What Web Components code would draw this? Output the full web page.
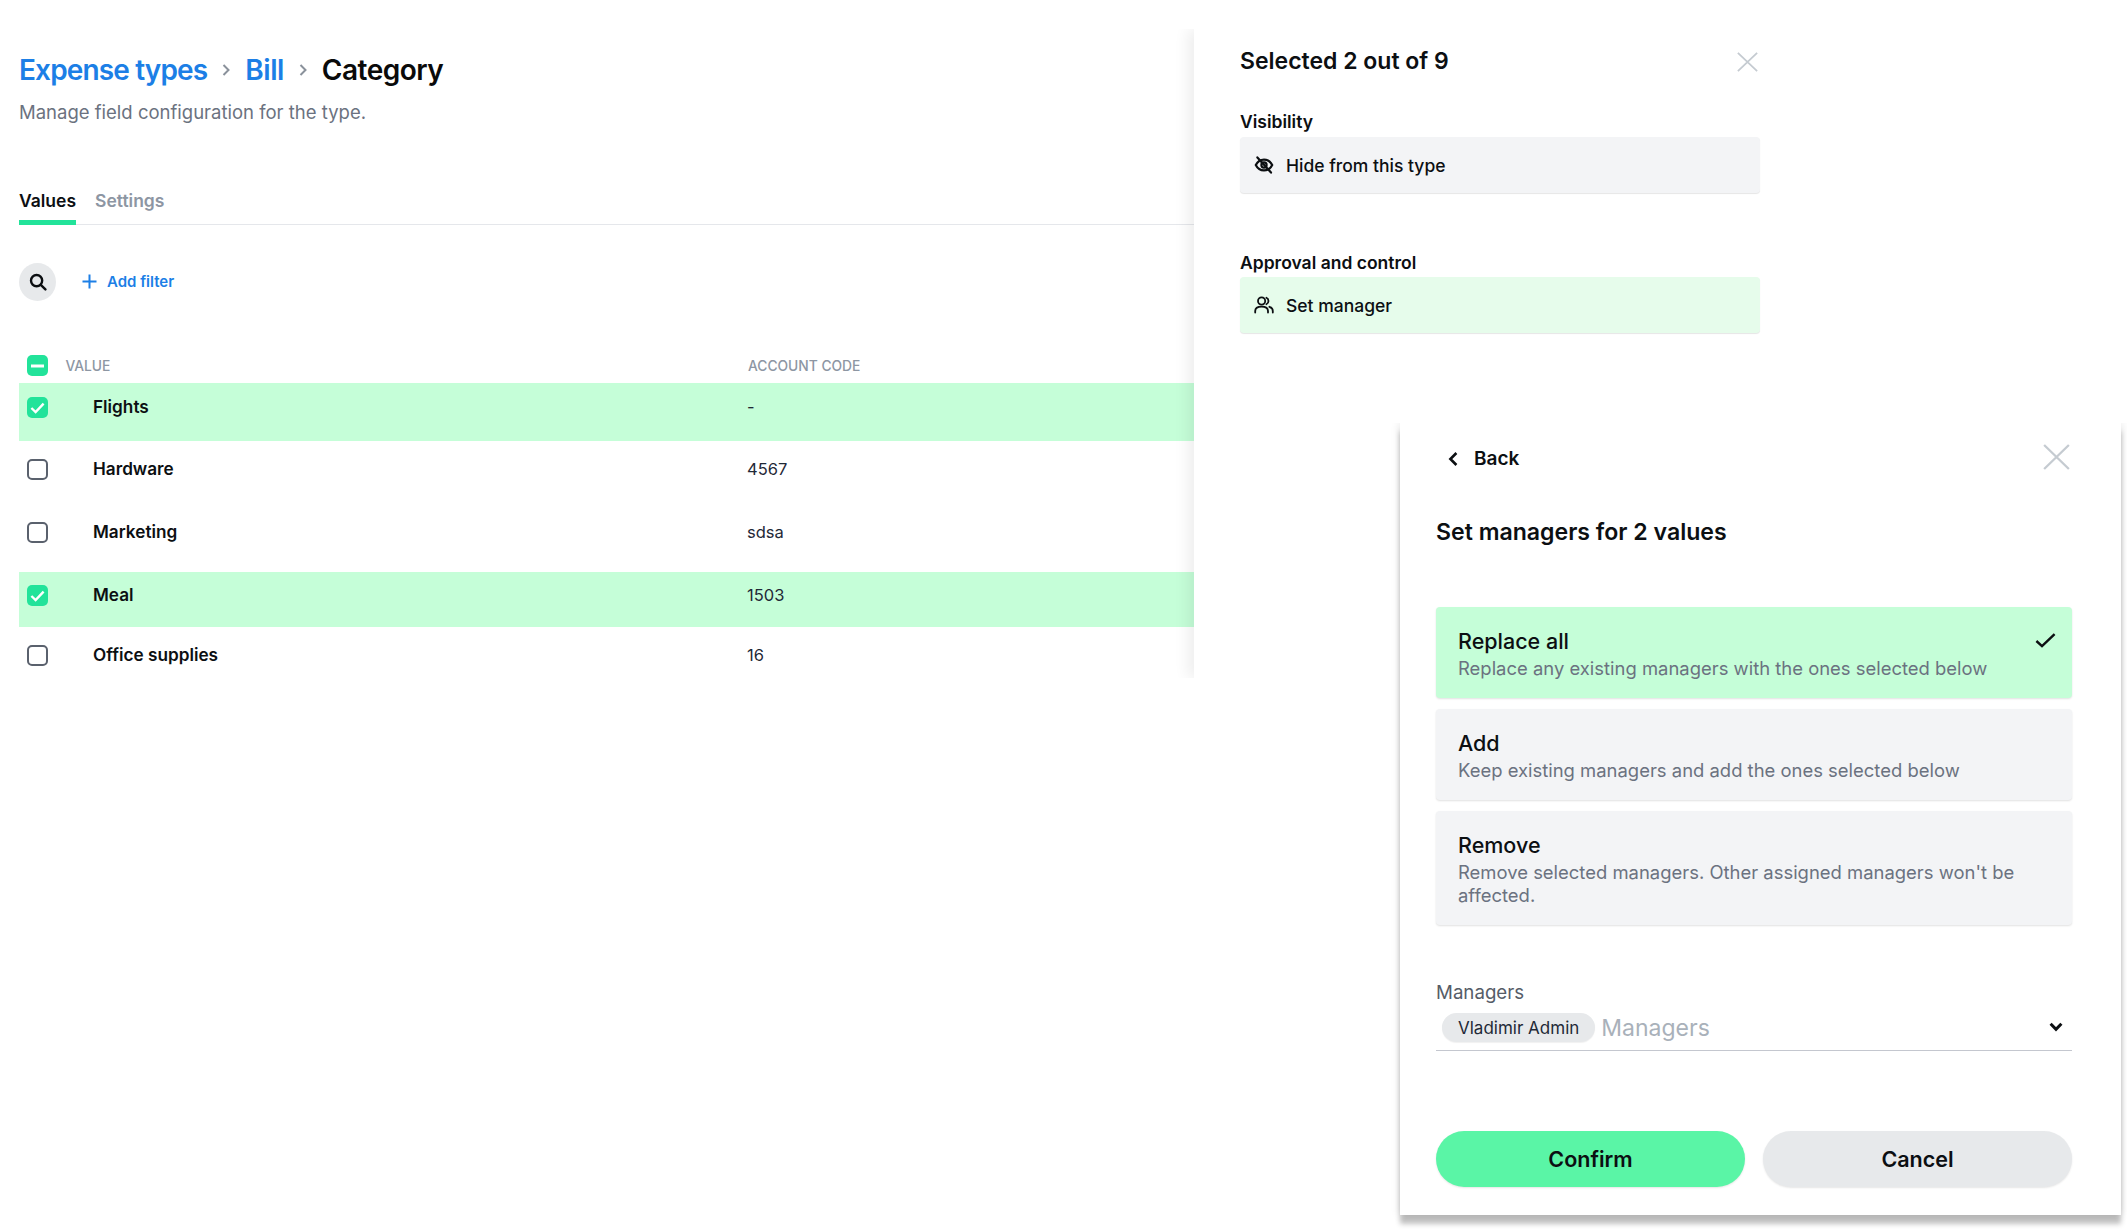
<!DOCTYPE html>
<html>
<head>
<meta charset="utf-8">
<title>Expense types</title>
<style>
  html, body { margin: 0; padding: 0; background: #fff; }
  body { font-family: Inter, "Liberation Sans", sans-serif; width: 2127px; height: 1230px; overflow: hidden; color: #0c0f12; }
</style>
</head>
<body>
<app-page>
  <type-view slot="main"></type-view>
  <bulk-panel slot="side"></bulk-panel>
  <manager-panel slot="over"></manager-panel>
</app-page>

<script>
const ICONS = {
  close: `<svg width="100%" height="100%" viewBox="0 0 24 24" fill="none" stroke="#c5cbd1" stroke-width="2" preserveAspectRatio="none"><path d="M1 1 23 23M23 1 1 23"/></svg>`,
  search: `<svg width="18" height="18" viewBox="0 0 18 18" fill="none" stroke="#0c0f12" stroke-width="2.4"><circle cx="7.6" cy="7.6" r="5.6"/><path d="M11.8 11.8 16.4 16.4" stroke-linecap="round"/></svg>`,
  plus: `<svg width="15" height="15" viewBox="0 0 15 15" fill="none" stroke="#1c7fe6" stroke-width="2"><path d="M7.5 0.5v14M0.5 7.5h14"/></svg>`,
  chevron: `<svg width="10" height="14" viewBox="0 0 10 14" fill="none" stroke="#8a919b" stroke-width="2"><path d="M2.5 2 7.5 7 2.5 12"/></svg>`,
  eyeOff: `<svg width="20" height="20" viewBox="0 0 20 20" fill="none" stroke="#0c0f12" stroke-width="2.2" stroke-linecap="round"><path d="M1.8 10C3.6 6.4 6.5 4.6 10 4.6S16.4 6.4 18.2 10C16.4 13.6 13.5 15.4 10 15.4S3.6 13.6 1.8 10Z"/><circle cx="10" cy="10" r="2.6"/><path d="M3.4 2.4 17 17.6"/></svg>`,
  users: `<svg width="20" height="20" viewBox="0 0 20 20" fill="none" stroke="#0c0f12" stroke-width="1.8" stroke-linecap="round"><circle cx="7.6" cy="6" r="3.6"/><path d="M1.2 17.6V16c0-2.6 2.2-4.4 6.4-4.4s6.4 1.8 6.4 4.4v1.6"/><path d="M12.4 2.8a3.5 3.5 0 0 1 0 6.4M15.4 11.8c2 .7 3.4 2.2 3.4 4.2v1.6"/></svg>`,
  back: `<svg width="10" height="16" viewBox="0 0 10 16" fill="none" stroke="#0c0f12" stroke-width="2.6"><path d="M8.4 2 2.4 8l6 6"/></svg>`,
  check: `<svg width="21" height="15" viewBox="0 0 21 15" fill="none" stroke="#0c0f12" stroke-width="2.4"><path d="M1.4 8 7 13.2 19.6 1.2"/></svg>`,
  down: `<svg width="14" height="10" viewBox="0 0 14 10" fill="none" stroke="#0c0f12" stroke-width="3"><path d="M1.6 1.8 7 7.4l5.4-5.6"/></svg>`
};

class AppPage extends HTMLElement {
  constructor() {
    super();
    this.attachShadow({ mode: "open" }).innerHTML = `
      <style>
        :host { display: flex; position: relative; width: 2127px; height: 1230px; align-items: flex-start; }
        .main { width: 1194px; flex: none; }
        .over { position: absolute; left: 1400px; top: 423px; z-index: 2; }
      </style>
      <div class="main"><slot name="main"></slot></div>
      <slot name="side"></slot>
      <div class="over"><slot name="over"></slot></div>`;
  }
}

class TypeView extends HTMLElement {
  constructor() {
    super();
    this.attachShadow({ mode: "open" }).innerHTML = `
      <style>
        :host { display: block; height: 678px; padding: 50px 0 0 19px; box-sizing: border-box; overflow: hidden; }
        .crumbs { display: flex; align-items: center; height: 40px; font-size: 28px; font-weight: 600; letter-spacing: -0.5px; }
        .crumbs a { color: #1c7fe6; }
        .crumbs a.long { letter-spacing: -0.85px; }
        .crumbs span { display: flex; width: 38px; justify-content: center; }
        .sub { margin: 11px 0 0; font-size: 18.5px; line-height: 23px; color: #6b7280; }
        .tabs { display: flex; gap: 19px; margin-top: 65px; border-bottom: 1px solid #e5e7eb; font-size: 17.5px; font-weight: 600; height: 35px; }
        .tab { color: #8d96a3; line-height: 24px; box-sizing: border-box; height: 36px; }
        .tab.on { color: #0c0f12; border-bottom: 5px solid #22e39a; border-radius: 3px 3px 0 0; }
        .filters { display: flex; align-items: center; margin-top: 38px; height: 38px; }
        .search { width: 37px; height: 38px; border-radius: 50%; background: #e7e9eb; display: flex; align-items: center; justify-content: center; }
        .add { display: flex; align-items: center; gap: 10px; margin-left: 26px; margin-top: -2px; color: #1c7fe6; font-size: 15px; font-weight: 600; }
        value-table { margin-top: 54px; }
      </style>
      <div class="crumbs">
        <a class="long">Expense types</a><span>${ICONS.chevron}</span><a>Bill</a><span>${ICONS.chevron}</span><b style="font-weight:600;color:#0a0a0a">Category</b>
      </div>
      <p class="sub">Manage field configuration for the type.</p>
      <div class="tabs"><div class="tab on">Values</div><div class="tab">Settings</div></div>
      <div class="filters">
        <div class="search">${ICONS.search}</div>
        <div class="add">${ICONS.plus}<span>Add filter</span></div>
      </div>
      <value-table></value-table>`;
  }
}

class CheckBox extends HTMLElement {
  constructor() {
    super();
    this.attachShadow({ mode: "open" });
  }
  connectedCallback() {
    const state = this.getAttribute("state") || "off";
    let mark = "";
    if (state === "on") mark = `<svg width="15" height="12" viewBox="0 0 15 12" fill="none" stroke="#fff" stroke-width="2.4"><path d="M1.4 6 5.6 10 13.6 1.6"/></svg>`;
    if (state === "some") mark = `<svg width="13" height="4" viewBox="0 0 13 4" fill="none" stroke="#fff" stroke-width="3"><path d="M0 2h13"/></svg>`;
    this.shadowRoot.innerHTML = `
      <style>
        :host { display: block; width: 21px; height: 21px; }
        div { box-sizing: border-box; width: 100%; height: 100%; border-radius: 5px; display: flex; align-items: center; justify-content: center; }
        .off { border: 2px solid #5a616d; background: #fff; }
        .on, .some { background: #22e39a; }
      </style>
      <div class="${state}">${mark}</div>`;
  }
}

class ValueRow extends HTMLElement {
  constructor() {
    super();
    this.attachShadow({ mode: "open" });
  }
  connectedCallback() {
    const on = this.hasAttribute("selected");
    this.shadowRoot.innerHTML = `
      <style>
        :host { display: grid; grid-template-columns: 74px 654px 1fr; box-sizing: border-box; padding-top: ${this.getAttribute("pad") || 14}px; height: ${this.getAttribute("h")}px; background: ${on ? "#c5fed8" : "transparent"}; margin-bottom: ${this.getAttribute("gap") || 0}px; }
        check-box { margin-left: 8px; }
        div { font-size: 17.2px; line-height: 20px; }
        .name { font-weight: 600; color: #0c0f12; }
        .code { color: #1f2937; font-size: 16.5px; }
      </style>
      <check-box state="${on ? "on" : "off"}"></check-box>
      <div class="name">${this.getAttribute("name")}</div>
      <div class="code">${this.getAttribute("code")}</div>`;
  }
}

class ValueTable extends HTMLElement {
  constructor() {
    super();
    this.attachShadow({ mode: "open" }).innerHTML = `
      <style>
        :host { display: block; }
        .head { display: grid; grid-template-columns: 38.5px 682.5px 1fr; height: 28px; padding-left: 8px; font-size: 13.8px; line-height: 22px; font-weight: 500; color: #8d96a3; }
      </style>
      <div class="head"><check-box state="some"></check-box><span>VALUE</span><span>ACCOUNT CODE</span></div>
      <value-row selected name="Flights" code="-" h="58" gap="4"></value-row>
      <value-row name="Hardware" code="4567" h="63"></value-row>
      <value-row name="Marketing" code="sdsa" h="64"></value-row>
      <value-row selected name="Meal" code="1503" h="55" gap="4" pad="13"></value-row>
      <value-row name="Office supplies" code="16" h="47"></value-row>`;
  }
}

class ActionCard extends HTMLElement {
  constructor() {
    super();
    this.attachShadow({ mode: "open" });
  }
  connectedCallback() {
    const green = this.hasAttribute("green");
    this.shadowRoot.innerHTML = `
      <style>
        :host { display: flex; align-items: center; gap: 12px; box-sizing: border-box; height: 56px; padding-left: 14px; border-radius: 4px; font-size: 17.5px; font-weight: 500; color: #0c0f12; background: ${green ? "#e6fceb" : "#f3f4f6"}; box-shadow: 0 1px 1px rgba(0,0,0,.1); }
      </style>
      ${ICONS[this.getAttribute("icon")]}<slot></slot>`;
  }
}

class BulkPanel extends HTMLElement {
  constructor() {
    super();
    this.attachShadow({ mode: "open" }).innerHTML = `
      <style>
        :host { display: block; position: relative; z-index: 1; margin-top: 29px; box-sizing: border-box; width: 600px; height: 649px; padding: 16px 34px 0 46px; background: #fff; box-shadow: -6px 0 14px rgba(0,0,0,.07); clip-path: inset(0 0 0 -30px); }
        .top { display: flex; justify-content: space-between; align-items: center; height: 32px; font-size: 23px; font-weight: 600; }
        .x { width: 21px; height: 20px; margin-right: 2px; margin-top: -2px; }
        .label { font-size: 17.5px; font-weight: 600; line-height: 24px; }
        .a { margin-top: 33px; margin-bottom: 3px; }
        .b { margin-top: 58px; margin-bottom: 2px; }
      </style>
      <div class="top"><span>Selected 2 out of 9</span><div class="x">${ICONS.close}</div></div>
      <div class="label a">Visibility</div>
      <action-card icon="eyeOff">Hide from this type</action-card>
      <div class="label b">Approval and control</div>
      <action-card icon="users" green>Set manager</action-card>`;
  }
}

class OptionCard extends HTMLElement {
  constructor() {
    super();
    this.attachShadow({ mode: "open" });
  }
  connectedCallback() {
    const on = this.hasAttribute("selected");
    this.shadowRoot.innerHTML = `
      <style>
        :host { display: block; position: relative; box-sizing: border-box; padding: 19px 22px 18px 22px; border-radius: 4px; background: ${on ? "#c5fed8" : "#f3f4f6"}; box-shadow: 0 1px 2px rgba(0,0,0,.12); margin-bottom: 11px; }
        .t { font-size: 21.5px; font-weight: 500; line-height: 30px; color: #0c0f12; margin-bottom: 1px; }
        .d { font-size: 18.45px; line-height: 23px; color: #6b7280; }
        .ok { position: absolute; right: 16px; top: 26px; line-height: 0; }
      </style>
      <div class="t">${this.getAttribute("heading")}</div>
      <div class="d"><slot></slot></div>
      ${on ? `<div class="ok">${ICONS.check}</div>` : ""}`;
  }
}

class ManagerSelect extends HTMLElement {
  constructor() {
    super();
    this.attachShadow({ mode: "open" }).innerHTML = `
      <style>
        :host { display: block; }
        .label { font-size: 18.7px; line-height: 24px; color: #565d68; }
        .box { display: flex; align-items: center; margin-top: 8px; padding: 0 9px 8px 6px; box-sizing: border-box; height: 38px; border-bottom: 1px solid #c4c7cf; }
        .chip { display: flex; align-items: center; height: 29px; padding: 0 16px 0 16px; border-radius: 15px; background: #e7e9eb; font-size: 17px; color: #1f2937; box-shadow: 0 1px 1px rgba(0,0,0,.06); }
        .ph { margin-left: 6px; font-size: 23px; color: #a9b1ba; flex: 1; }
        svg { display: block; margin-top: -2px; }
      </style>
      <div class="label">Managers</div>
      <div class="box"><div class="chip">Vladimir Admin</div><div class="ph">Managers</div>${ICONS.down}</div>`;
  }
}

class PillButton extends HTMLElement {
  constructor() {
    super();
    this.attachShadow({ mode: "open" });
  }
  connectedCallback() {
    const main = this.hasAttribute("primary");
    this.shadowRoot.innerHTML = `
      <style>
        :host { display: flex; align-items: center; justify-content: center; height: 56px; border-radius: 28px; font-size: 21.5px; font-weight: 600; color: #0c0f12; background: ${main ? "#5af5a6" : "#e7e9eb"}; box-shadow: 0 1px 2px rgba(0,0,0,.1); }
      </style>
      <slot></slot>`;
  }
}

class ManagerPanel extends HTMLElement {
  constructor() {
    super();
    this.attachShadow({ mode: "open" }).innerHTML = `
      <style>
        :host { display: block; box-sizing: border-box; width: 721px; height: 792px; padding: 20px 49px 0 36px; background: #fff; box-shadow: 0 9px 5px rgba(0,0,0,.24), 0 0 9px rgba(0,0,0,.13); clip-path: inset(0 -6px -16px -14px); }
        .top { display: flex; align-items: center; height: 30px; font-size: 19px; font-weight: 600; }
        .back { margin-left: 12px; margin-right: 16px; line-height: 0; margin-top: 2px; }
        .x { width: 27px; height: 26px; margin-left: auto; margin-right: 2px; margin-top: -2px; }
        h2 { margin: 44px 0 0; font-size: 23.1px; line-height: 30px; font-weight: 600; height: 90px; }
        manager-select { margin-top: 56px; }
        .btns { display: grid; grid-template-columns: 309px 309px; gap: 18px; margin-top: 80px; }
      </style>
      <div class="top"><span class="back">${ICONS.back}</span><span>Back</span><div class="x">${ICONS.close}</div></div>
      <h2>Set managers for 2 values</h2>
      <option-card selected heading="Replace all">Replace any existing managers with the ones selected below</option-card>
      <option-card heading="Add">Keep existing managers and add the ones selected below</option-card>
      <option-card heading="Remove">Remove selected managers. Other assigned managers won't be affected.</option-card>
      <manager-select></manager-select>
      <div class="btns"><pill-button primary>Confirm</pill-button><pill-button>Cancel</pill-button></div>`;
  }
}

customElements.define("check-box", CheckBox);
customElements.define("value-row", ValueRow);
customElements.define("value-table", ValueTable);
customElements.define("type-view", TypeView);
customElements.define("action-card", ActionCard);
customElements.define("bulk-panel", BulkPanel);
customElements.define("option-card", OptionCard);
customElements.define("manager-select", ManagerSelect);
customElements.define("pill-button", PillButton);
customElements.define("manager-panel", ManagerPanel);
customElements.define("app-page", AppPage);
</script>
</body>
</html>
